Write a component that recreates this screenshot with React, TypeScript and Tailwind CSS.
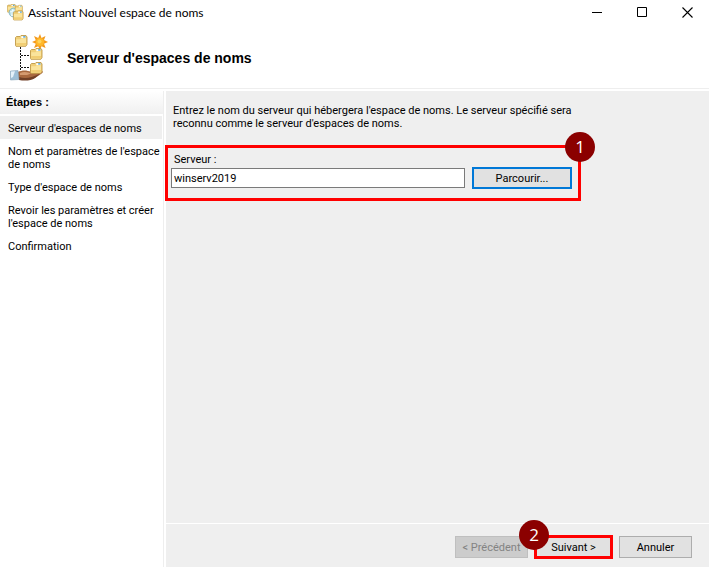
import React, { useState } from "react";

const steps = [
  "Serveur d'espaces de noms",
  "Nom et paramètres de l'espace de noms",
  "Type d'espace de noms",
  "Revoir les paramètres et créer l'espace de noms",
  "Confirmation",
];

function Folder({ x, y, scale = 1 }: { x: number; y: number; scale?: number }) {
  return (
    <g transform={`translate(${x} ${y}) scale(${scale})`}>
      <path d="M0.5 2.5 L1.5 1.5 H5 L6 0.5 H11 L12 2 V9.5 L10.8 11.3 H1 L0.5 10.5 Z" fill="#f0cf78" stroke="#bf9a48" strokeWidth="0.9" />
      <path d="M6.3 1.2 H10.4 V3 H6.3 Z" fill="#fff" />
      <path d="M8.2 1.2 H10.4 V2.6 H8.2 Z" fill="#3f9bd8" />
      <path d="M1.2 4.3 H5.5 L6.6 3.3 H11 V9.5 L10.3 10.6 H1.2 Z" fill="#fae49c" />
      <path d="M1.2 8 H11 V9.5 L10.3 10.6 H1.2 Z" fill="#f1ce74" />
    </g>
  );
}

function NamespaceIcon() {
  return (
    <svg width="40" height="48" viewBox="0 0 40 48" aria-hidden="true">
      <path d="M10.5 13 V37 M11 21.5 H20 M11 33.5 H20" fill="none" stroke="#111" strokeWidth="1" strokeDasharray="2 1" />
      <path d="M30 0 L31.5 4 L35.5 2 L34 6 L38 8 L34 9.8 L35.6 14 L31.5 12.2 L30 16 L28.2 12.2 L24 14 L25.8 9.8 L22 8 L25.8 6.2 L24 2 L28.2 4 Z" fill="#f39a1c" />
      <circle cx="30" cy="8" r="4" fill="#ffb82a" />
      <circle cx="29.5" cy="7.5" r="2" fill="#ffd35a" />
      <path d="M8 38 C12 36 17 36 21 38 L31 37 C34 37 33 39 31 40 L25 44 C21 46 14 46 8 45 Z" fill="#a9683f" />
      <path d="M9 43 C15 45 22 44 31 39 L25 44 C21 47 14 47 9 46 Z" fill="#713f26" />
      <path d="M10 39 C14 37 18 38 21 39.5 L17 41 L10 41 Z" fill="#d59a70" />
      <path d="M0.5 37 L8 36.5 L9 45.5 L0.5 46 Z" fill="#9ebfd6" stroke="#86a3b7" strokeWidth="0.6" />
      <path d="M1 37.5 L5 37.3 L3 43 L1 44 Z" fill="#e4f1f9" />
      <Folder x={5} y={1} />
      <Folder x={20} y={14} />
      <Folder x={20} y={28} />
    </svg>
  );
}

function AppIcon() {
  return (
    <svg width="17" height="17" viewBox="0 0 17 17" aria-hidden="true">
      <Folder x={0} y={0} scale={0.72} />
      <circle cx="6.5" cy="8.5" r="4.4" fill="#b9dfe5" stroke="#79aebb" strokeWidth="0.8" />
      <path d="M3 8 Q6 5 10 8 M4 11 Q6 12 8 11 M6 5 Q4.5 8 5 12" fill="none" stroke="#f2fbff" strokeWidth="1" />
      <Folder x={8} y={1} scale={0.62} />
      <Folder x={6} y={6.5} scale={0.84} />
    </svg>
  );
}

function Badge({ children }: { children: React.ReactNode }) {
  return (
    <span className="flex size-[30px] items-center justify-center rounded-full bg-[#8b0000] font-['Open_Sans',sans-serif] text-[17px] leading-[30px] text-white">
      {children}
    </span>
  );
}

export default function App() {
  const [server, setServer] = useState("winserv2019");
  return (
    <div className="flex min-h-screen flex-col bg-white font-[Roboto,'Liberation_Sans',sans-serif] text-[11px] leading-[13px] text-black">
      <header className="border-b border-[#eeeeee]">
        <div className="flex h-[25px] items-center">
          <div className="flex flex-1 items-center gap-1 pl-[7px]">
            <AppIcon />
            <span className="font-[Lato,'Open_Sans',sans-serif] text-[12px] leading-4">Assistant Nouvel espace de noms</span>
          </div>
          <button aria-label="Réduire" className="flex h-full w-[45px] items-center justify-center">
            <svg width="12" height="12" viewBox="0 0 12 12"><path d="M1 5.5 H11" stroke="#000" /></svg>
          </button>
          <button aria-label="Agrandir" className="flex h-full w-[45px] items-center justify-center">
            <svg width="12" height="12" viewBox="0 0 12 12"><path d="M1.5 0.5 H10.5 V9.5 H1.5 Z" fill="none" stroke="#000" /></svg>
          </button>
          <button aria-label="Fermer" className="flex h-full w-[45px] items-center justify-center">
            <svg width="12" height="12" viewBox="0 0 12 12"><path d="M1.5 0.5 L11.5 10.5 M11.5 0.5 L1.5 10.5" stroke="#000" strokeWidth="1.1" /></svg>
          </button>
        </div>
        <div className="flex h-[63px] items-center gap-[17px] pt-0.5 pl-[10px]">
          <NamespaceIcon />
          <h1 className="font-['Liberation_Sans',Arial,sans-serif] text-[14px] leading-4 font-bold">Serveur d'espaces de noms</h1>
        </div>
      </header>

      <div className="flex flex-1 gap-0.5 pt-0.5">
        <nav className="w-[164px] shrink-0 border-r border-[#eeeeee]" aria-label="Étapes">
          <h2 className="mb-0.5 bg-linear-to-b from-white to-[#f0f0f0] py-[5px] pl-[6px] font-['Liberation_Sans',Arial,sans-serif] font-bold">Étapes :</h2>
          <ol className="pr-px">
            {steps.map((step, i) => (
              <li key={step} aria-current={i === 0 ? "step" : undefined} className="pt-[6px] pb-1 pl-2 aria-[current=step]:bg-[#efefef]">
                {step}
              </li>
            ))}
          </ol>
        </nav>

        <main className="flex min-w-0 flex-1 flex-col bg-[#efefef]">
          <div className="flex-1 pt-[13px]">
            <p className="max-w-[410px] pl-[7px]">
              Entrez le nom du serveur qui hébergera l'espace de noms. Le serveur spécifié sera reconnu comme le serveur d'espaces de noms.
            </p>
            <div className="relative mt-[15px] w-[415px] pt-2 pb-3">
              <label htmlFor="server" className="block pl-2">Serveur :</label>
              <div className="mt-px flex items-center gap-[7px] pl-[5px]">
                <input
                  id="server"
                  value={server}
                  onChange={(e) => setServer(e.target.value)}
                  className="h-5 w-[294px] border border-[#7a7a7a] bg-white px-0.5 outline-none"
                />
                <button className="h-[22px] w-[100px] border-2 border-[#0078d7] bg-[#e1e1e1]">Parcourir...</button>
              </div>
              <div className="pointer-events-none absolute inset-0 -left-px border-3 border-[#ff0000]" />
              <div className="absolute -top-[13px] -right-[14px]"><Badge>1</Badge></div>
            </div>
          </div>
          <footer className="flex items-center justify-end gap-[6px] border-t border-white pt-[11px] pr-[17px] pb-2">
            <button disabled className="h-[22px] w-[73px] border border-[#bfbfbf] bg-[#cccccc] text-[#838383]">&lt; Précédent</button>
            <div className="relative">
              <button className="block h-6 w-[79px] border-3 border-[#ff0000] bg-[#e1e1e1]">Suivant &gt;</button>
              <div className="absolute -top-[15px] -left-[15px]"><Badge>2</Badge></div>
            </div>
            <button className="h-[22px] w-[73px] border border-[#adadad] bg-[#e1e1e1]">Annuler</button>
          </footer>
        </main>
      </div>
    </div>
  );
}
